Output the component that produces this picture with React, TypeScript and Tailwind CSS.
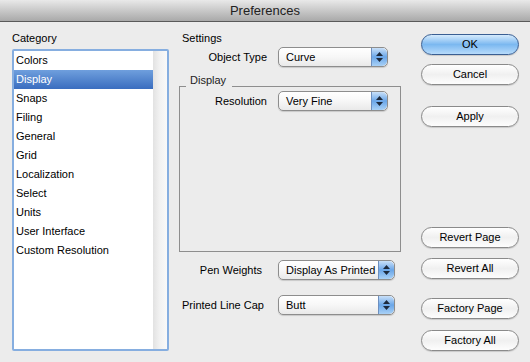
import React from "react";

const font = { fontFamily: '"Liberation Sans", Arial, sans-serif' };

function Stepper() {
  return (
    <div className="w-[16px] h-full flex flex-col items-center justify-center gap-[2px] rounded-r-[5px] border-l border-[#6d8fbf] bg-gradient-to-b from-[#c9e0f8] via-[#6aa6e8] to-[#a9d1f6]">
      <svg width="7" height="4" viewBox="0 0 7 4"><path d="M0 4 L3.5 0 L7 4 Z" fill="#1d2a3d" /></svg>
      <svg width="7" height="4" viewBox="0 0 7 4"><path d="M0 0 L3.5 4 L7 0 Z" fill="#1d2a3d" /></svg>
    </div>
  );
}

function Select({ value, w }: { value: string; w: string }) {
  return (
    <div className={`${w} h-[20px] flex rounded-[5px] border border-[#8d8d8d] bg-gradient-to-b from-[#ffffff] via-[#f7f7f7] to-[#e9e9e9] shadow-[0_1px_1px_rgba(0,0,0,0.15)] overflow-hidden`}>
      <div className="flex-1 pl-[7px] text-[11px] leading-[18px] text-black whitespace-nowrap">{value}</div>
      <Stepper />
    </div>
  );
}

function Btn({ label, primary }: { label: string; primary?: boolean }) {
  return (
    <div
      className={`w-[98px] h-[21px] rounded-full border text-[11px] leading-[19px] text-center text-black whitespace-nowrap shadow-[0_1px_1px_rgba(0,0,0,0.15)] ${
        primary
          ? "border-[#3a5f93] bg-gradient-to-b from-[#d6ebfc] via-[#7bb8f0] to-[#b7dbfb]"
          : "border-[#8a8a8a] bg-gradient-to-b from-[#ffffff] via-[#f0f0f0] to-[#fdfdfd]"
      }`}
    >
      {label}
    </div>
  );
}

export default function App() {
  const items = [
    "Colors",
    "Display",
    "Snaps",
    "Filing",
    "General",
    "Grid",
    "Localization",
    "Select",
    "Units",
    "User Interface",
    "Custom Resolution",
  ];
  return (
    <div style={font} className="w-[530px] h-[362px] bg-[#ececec] flex flex-col overflow-hidden">
      <div className="h-[22px] shrink-0 border-b border-[#5a5a5a] bg-gradient-to-b from-[#e9e9e9] to-[#a9a9a9] flex items-center justify-center text-[13px] text-[#222]">
        Preferences
      </div>
      <div className="flex flex-1">
        {/* Left column */}
        <div className="ml-[12px] w-[157px] flex flex-col">
          <div className="h-[27px] pt-[9px] text-[11px] leading-[14px] text-black">Category</div>
          <div className="h-[302px] rounded-[2px] border-2 border-[#86aee0] bg-white flex">
            <div className="flex-1">
              {items.map((it) => (
                <div
                  key={it}
                  className={`h-[19px] pl-[2px] text-[11px] leading-[19px] whitespace-nowrap ${
                    it === "Display"
                      ? "bg-gradient-to-b from-[#6f9fdd] to-[#3a6dbf] text-white"
                      : "text-black"
                  }`}
                >
                  {it}
                </div>
              ))}
            </div>
            <div className="w-[14px] bg-gradient-to-r from-[#e2e2e2] via-[#f2f2f2] to-[#f9f9f9]" />
          </div>
        </div>

        {/* Middle column */}
        <div className="ml-[10px] w-[222px] flex flex-col">
          <div className="h-[25px] pt-[9px] pl-[3px] text-[11px] leading-[14px] text-black">Settings</div>
          <div className="flex items-center h-[20px]">
            <div className="w-[88px] text-right text-[11px] text-black whitespace-nowrap">Object Type</div>
            <div className="ml-[11px]">
              <Select value="Curve" w="w-[110px]" />
            </div>
          </div>
          {/* group box */}
          <div className="mt-[7px]">
            <div className="h-[12px] pl-[11px] text-[11px] leading-[12px] text-[#222]">Display</div>
            <div className="h-[166px] border border-[#8e8e8e] border-t-0 flex flex-col">
              <div className="flex h-0">
                <div className="w-[6px] border-t border-[#8e8e8e]" />
                <div className="w-[46px]" />
                <div className="flex-1 border-t border-[#8e8e8e]" />
              </div>
              <div className="flex items-center h-[20px] mt-[5px]">
                <div className="w-[87px] text-right text-[11px] text-black whitespace-nowrap">Resolution</div>
                <div className="ml-[11px]">
                  <Select value="Very Fine" w="w-[110px]" />
                </div>
              </div>
            </div>
          </div>
          <div className="flex items-center h-[20px] mt-[8px]">
            <div className="w-[83px] text-right text-[11px] text-black whitespace-nowrap">Pen Weights</div>
            <div className="ml-[16px]">
              <Select value="Display As Printed" w="w-[117px]" />
            </div>
          </div>
          <div className="flex items-center h-[20px] mt-[15px]">
            <div className="w-[99px] pl-[3px] text-[11px] text-black whitespace-nowrap">Printed Line Cap</div>
            <div>
              <Select value="Butt" w="w-[117px]" />
            </div>
          </div>
        </div>

        {/* Right column */}
        <div className="ml-[20px] flex flex-col pt-[12px]">
          <Btn label="OK" primary />
          <div className="mt-[9px]"><Btn label="Cancel" /></div>
          <div className="mt-[21px]"><Btn label="Apply" /></div>
          <div className="mt-[100px]"><Btn label="Revert Page" /></div>
          <div className="mt-[10px]"><Btn label="Revert All" /></div>
          <div className="mt-[19px]"><Btn label="Factory Page" /></div>
          <div className="mt-[11px]"><Btn label="Factory All" /></div>
        </div>
      </div>
    </div>
  );
}
